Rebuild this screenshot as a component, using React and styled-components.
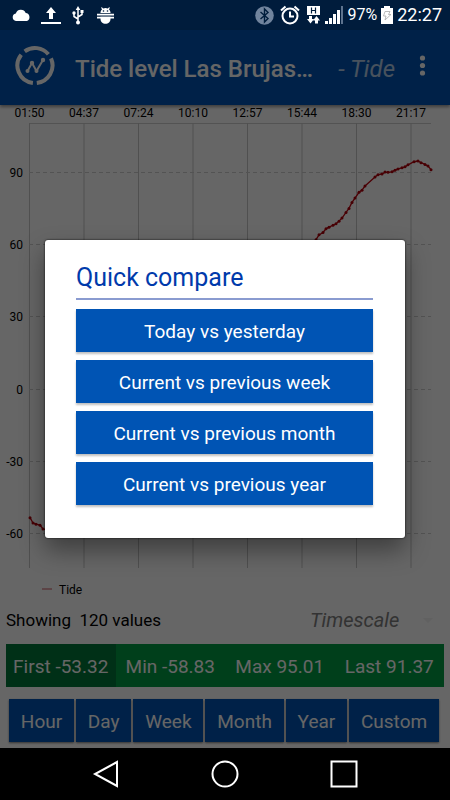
import React from "react";
import styled, { createGlobalStyle } from "styled-components";

const GlobalStyle = createGlobalStyle`
  body {
    margin: 0;
    background: #000;
    font-family: Roboto, "Liberation Sans", sans-serif;
  }

  * {
    box-sizing: border-box;
  }

  button,
  select {
    font-family: inherit;
  }
`;

const Phone = styled.div`
  display: flex;
  flex-direction: column;
  min-height: 100vh;
`;

const Screen = styled.div`
  position: relative;
  flex: 1;
  display: flex;
  flex-direction: column;
  background-color: #fff;
`;

const StatusBar = styled.div`
  display: flex;
  align-items: center;
  justify-content: space-between;
  height: 30px;
  padding: 0 8px 0 12px;
  background-color: #004896;
  color: #fff;
`;

const StatusIcons = styled.div`
  position: relative;
  z-index: 2;
  display: flex;
  align-items: center;
  gap: ${(props) => props.$gap};
`;

const StatusText = styled.span`
  font-size: ${(props) => (props.$large ? "18px" : "16px")};
  line-height: 32px;
`;

const AppBar = styled.header`
  display: flex;
  align-items: center;
  height: 75px;
  padding: 0 20px 0 15px;
  background-color: #0054b4;
  color: #fff;
  box-shadow: 0 2px 3px rgba(0, 0, 0, 0.4);
`;

const Title = styled.h1`
  flex: 1;
  margin: 0 0 0 20px;
  padding-top: 2px;
  font-size: 24px;
  font-weight: 500;
  line-height: 30px;
`;

const SeriesName = styled.span`
  padding-top: 2px;
  font-size: 24px;
  font-style: italic;
  line-height: 30px;
  opacity: 0.7;
`;

const MenuButton = styled.button`
  display: flex;
  margin-left: 20px;
  padding: 0;
  border: 0;
  background: none;
`;

const Chart = styled.svg`
  display: block;
  width: 100%;
  height: auto;
  font-size: 12px;
`;

const SummaryRow = styled.div`
  display: flex;
  align-items: center;
  justify-content: space-between;
  height: 40px;
  padding: 0 17px 0 6px;
`;

const Showing = styled.p`
  margin: 0;
  font-size: 17px;
  white-space: pre;
`;

const Timescale = styled.label`
  display: flex;
  align-items: center;
`;

const TimescaleSelect = styled.select`
  appearance: none;
  width: 113px;
  padding: 0;
  border: 0;
  background: none;
  color: #808080;
  font-size: 20px;
  font-style: italic;
`;

const Stats = styled.div`
  display: grid;
  grid-template-columns: repeat(4, 1fr);
  margin: 4px 6px 0;
  background-color: #009d44;
`;

const Stat = styled.div`
  height: 43px;
  background-color: ${(props) => (props.$active ? "#00783a" : "transparent")};
  color: #fff;
  font-size: 19px;
  line-height: 45px;
  text-align: center;
`;

const RangeRow = styled.div`
  display: flex;
  gap: 2px;
  margin: 12px 11px 6px 9px;
`;

const RangeButton = styled.button`
  flex: 1 0 auto;
  height: 43px;
  padding: 2px 11px 0;
  border: 0;
  background-color: #0054b4;
  box-shadow: 0 1px 2px rgba(0, 0, 0, 0.5);
  color: #fff;
  font-size: 19px;
`;

const Scrim = styled.div`
  position: absolute;
  inset: 0;
  display: flex;
  align-items: center;
  justify-content: center;
  padding: 30px 45px 0;
  background-color: rgba(0, 0, 0, 0.6);
`;

const Dialog = styled.div`
  width: 100%;
  padding: 21px 32px 33px 31px;
  border-radius: 3px;
  background-color: #fff;
  box-shadow: 0 12px 24px rgba(0, 0, 0, 0.4), 0 0 2px #000;
`;

const DialogTitle = styled.h2`
  margin: 0 0 9px;
  padding-bottom: 4px;
  border-bottom: 2px solid #8a9bd0;
  color: #003aab;
  font-size: 25px;
  font-weight: 400;
  line-height: 33px;
`;

const CompareList = styled.div`
  display: grid;
  gap: 8px;
`;

const CompareButton = styled.button`
  height: 43px;
  padding: 2px 0 0;
  border: 0;
  background-color: #0054b4;
  box-shadow: 0 2px 2px rgba(0, 0, 0, 0.25);
  color: #fff;
  font-size: 19px;
`;

const NavBar = styled.nav`
  display: flex;
  justify-content: center;
  gap: 91px;
  height: 52px;
  background-color: #000;
`;

const NavButton = styled.button`
  display: flex;
  align-items: center;
  padding: 0;
  border: 0;
  background: none;
`;

const TIMES = ["01:50", "04:37", "07:24", "10:10", "12:57", "15:44", "18:30", "21:17"];
const LEVELS = [90, 60, 30, 0, -30, -60];
const STATS = ["First -53.32", "Min -58.83", "Max 95.01", "Last 91.37"];
const RANGES = ["Hour", "Day", "Week", "Month", "Year", "Custom"];
const COMPARISONS = [
  "Today vs yesterday",
  "Current vs previous week",
  "Current vs previous month",
  "Current vs previous year",
];

// [x, tide level]
const READINGS = [
  [30, -53.3], [33, -55.5], [36, -56], [40, -56.4], [43, -58], [50, -58.8],
  [80, -50], [120, -20], [160, 10], [200, 28], [240, 36], [280, 48],
  [312, 60], [316, 62.3], [319, 64.3], [323, 65.3], [326, 66.8], [329, 67.5],
  [333, 68.3], [336, 68.9], [339, 70], [342, 71.3], [346, 73.6], [349, 75.3],
  [352, 77.8], [355, 79.6], [359, 82], [362, 82.9], [365, 84.6], [375, 88.4],
  [378, 89.3], [382, 89.6], [385, 90.4], [388, 90.3], [392, 90.5], [395, 91.2],
  [398, 91.7], [402, 92.2], [405, 92.6], [408, 93.4], [414, 94.7], [418, 95],
  [421, 94.3], [425, 93.6], [428, 92.9], [431, 91.4],
];

const timeX = (i) => 29.5 + i * 54.5;
const levelY = (level) => 284.5 - level * 2.405;

function TideChart() {
  const points = READINGS.map(([x, level]) => `${x},${levelY(level)}`);

  return (
    <Chart viewBox="0 0 450 495" role="img" aria-label="Tide">
      <path d="M29 18.5H431" stroke="#d0d0d0" />
      {TIMES.map((time, i) => (
        <g key={time}>
          <text x={timeX(i)} y="12" textAnchor="middle">{time}</text>
          <path d={`M${timeX(i)} 18V463`} stroke="#c8c8c8" />
        </g>
      ))}
      {LEVELS.map((level) => (
        <g key={level}>
          <text x="23" y={levelY(level) + 4} textAnchor="end">{level}</text>
          <path
            d={`M29 ${Math.round(levelY(level)) - 0.5}H431`}
            stroke="#cfcfcf"
            strokeDasharray="4 3"
          />
        </g>
      ))}
      <polyline points={points.join(" ")} fill="none" stroke="#c0000c" strokeWidth="1.3" />
      {READINGS.map(([x, level]) => (
        <circle key={x} cx={x} cy={levelY(level)} r="1.5" fill="#b0000c" />
      ))}
      <path d="M42 484H52" stroke="#d6747c" strokeWidth="1.2" />
      <text x="59" y="489">Tide</text>
    </Chart>
  );
}

function CloudIcon() {
  return (
    <svg width="19" height="13" viewBox="0 0 19 13" fill="#fff">
      <path d="M4 12a3.800 3.800 0 0 1-.2-7.500A5.300 5.300 0 0 1 13.700 4 4.200 4.200 0 0 1 15 12z" />
    </svg>
  );
}

function UploadIcon() {
  return (
    <svg width="20" height="20" viewBox="0 0 20 20" fill="#fff">
      <path d="M10 2l5 6H12v6H8V8H5zM0 17h20v2H0z" />
    </svg>
  );
}

function UsbIcon() {
  return (
    <svg width="16" height="19" viewBox="-1 0 16 19" fill="none" stroke="#fff" strokeWidth="1.500">
      <path d="M6 3v12M6 13L2 10.500V6M6 11l4-2.500V6" />
      <path d="M6 0l2.300 4H3.700z" fill="#fff" stroke="none" />
      <circle cx="6" cy="16.500" r="2" fill="#fff" stroke="none" />
      <circle cx="2" cy="7" r="1.700" fill="#fff" stroke="none" />
      <path d="M8.500 4h3v3h-3z" fill="#fff" stroke="none" />
    </svg>
  );
}

function DebugIcon() {
  return (
    <svg width="17" height="17" viewBox="0 0 17 17" fill="#fff">
      <path d="M3.500 6c0-1.500.6-2.800 1.600-3.700L4 .8l.9-.6L6.200 1.600a6 6 0 0 1 4.600 0L12.100.2l.9.6-1.100 1.500c1 .9 1.600 2.200 1.600 3.700z" />
      <path d="M0 6.800h17v1.700H0zM0 9.800h17v1.700H0z" />
      <path d="M3.500 9.800h10v2.200c0 3-2.200 4.800-5 4.800s-5-1.800-5-4.800z" />
      <circle cx="6.500" cy="4" r=".8" fill="#001d3c" />
      <circle cx="10.500" cy="4" r=".8" fill="#001d3c" />
    </svg>
  );
}

function BluetoothIcon() {
  return (
    <svg width="19" height="19" viewBox="0 0 19 19" fill="none">
      <circle cx="9.500" cy="9.500" r="9.300" fill="#71849d" />
      <path d="M5.500 6l7.500 6.500L9.500 16V3L13 6.500 5.500 13" stroke="#001d3c" strokeWidth="1.400" />
    </svg>
  );
}

function AlarmIcon() {
  return (
    <svg width="20" height="20" viewBox="0 0 20 20" fill="none" stroke="#fff" strokeWidth="2">
      <circle cx="10" cy="11" r="7.500" />
      <path d="M10 6.500V11.500h4M1 5.500L5.500 1.500M19 5.500L14.500 1.500" />
    </svg>
  );
}

function DataIcon() {
  return (
    <svg width="15" height="18" viewBox="0 0 15 18" fill="#fff">
      <path d="M1 0h13v9H1z" />
      <path d="M5.500 1.500v6M9.500 1.500v6M5.500 4.500h4" stroke="#001d3c" strokeWidth="1.200" />
      <path d="M3 10h3v3h2l-3.500 4.500L1 13h2zM9 17.500h3v-3h2L10.500 10 7 14.500h2z" />
    </svg>
  );
}

function SignalIcon() {
  return (
    <svg width="18" height="18" viewBox="0 0 18 18" fill="#fff">
      <path d="M0 15h3v3H0zM4 12h3v6H4zM8 8h3v10H8zM12 4h3v14h-3z" />
      <path d="M16 0h2v18h-2z" fill="#5d738e" />
    </svg>
  );
}

function BatteryIcon() {
  return (
    <svg width="12" height="18" viewBox="0 0 12 18" fill="#fff">
      <path d="M3 0h6v2h3v16H0V2h3z" />
      <path d="M4 5.500h5L7.500 8.500H10L4 14l1-4H2.500z" fill="none" stroke="#aaa" strokeWidth=".8" />
    </svg>
  );
}

function LogoIcon() {
  return (
    <svg width="40" height="46" viewBox="0 0 40 46" fill="none" stroke="#fff">
      <path
        d="M9.700 6.300A17.500 17.500 0 0 1 33.400 9.300M36 13.400A17.500 17.500 0 0 1 21.800 37.900M17.900 37.900A17.500 17.500 0 0 1 6.200 9.700"
        strokeWidth="4"
      />
      <path d="M12.500 26L17 18L21.500 26L28 15" strokeWidth="2" />
      <g fill="#fff" stroke="none">
        <circle cx="12.500" cy="26" r="2" />
        <circle cx="17" cy="18" r="2.200" />
        <circle cx="21.500" cy="26" r="2" />
        <circle cx="28" cy="15" r="2.200" />
      </g>
    </svg>
  );
}

function App() {
  return (
    <Phone>
      <GlobalStyle />
      <Screen>
        <StatusBar>
          <StatusIcons $gap="10px">
            <CloudIcon />
            <UploadIcon />
            <UsbIcon />
            <DebugIcon />
          </StatusIcons>
          <StatusIcons $gap="4px">
            <StatusIcons $gap="6px">
              <BluetoothIcon />
              <AlarmIcon />
              <DataIcon />
            </StatusIcons>
            <SignalIcon />
            <StatusText>97%</StatusText>
            <BatteryIcon />
            <StatusText $large>22:27</StatusText>
          </StatusIcons>
        </StatusBar>

        <AppBar>
          <LogoIcon />
          <Title>Tide level Las Brujas…</Title>
          <SeriesName>- Tide</SeriesName>
          <MenuButton aria-label="Menu">
            <svg width="15" height="26" viewBox="0 0 15 26" fill="#fff">
              <circle cx="7.500" cy="3" r="2.600" />
              <circle cx="7.500" cy="10.500" r="2.600" />
              <circle cx="7.500" cy="18" r="2.600" />
            </svg>
          </MenuButton>
        </AppBar>

        <TideChart />

        <SummaryRow>
          <Showing>Showing  120 values</Showing>
          <Timescale>
            <TimescaleSelect aria-label="Timescale">
              <option>Timescale</option>
            </TimescaleSelect>
            <svg width="10" height="5" viewBox="0 0 10 5" fill="#f2f2f2">
              <path d="M0 0h10L5 5z" />
            </svg>
          </Timescale>
        </SummaryRow>

        <Stats>
          {STATS.map((stat, i) => (
            <Stat key={stat} $active={i === 0}>{stat}</Stat>
          ))}
        </Stats>

        <RangeRow>
          {RANGES.map((range) => (
            <RangeButton key={range}>{range}</RangeButton>
          ))}
        </RangeRow>

        <Scrim>
          <Dialog role="dialog" aria-labelledby="compare-title">
            <DialogTitle id="compare-title">Quick compare</DialogTitle>
            <CompareList>
              {COMPARISONS.map((label) => (
                <CompareButton key={label}>{label}</CompareButton>
              ))}
            </CompareList>
          </Dialog>
        </Scrim>
      </Screen>

      <NavBar>
        <NavButton aria-label="Back">
          <svg width="28" height="28" viewBox="0 0 28 28" fill="none" stroke="#fff" strokeWidth="2">
            <path d="M25 2v24L3 14z" />
          </svg>
        </NavButton>
        <NavButton aria-label="Home">
          <svg width="28" height="28" viewBox="0 0 28 28" fill="none" stroke="#fff" strokeWidth="2">
            <circle cx="14" cy="14" r="12.500" />
          </svg>
        </NavButton>
        <NavButton aria-label="Recent apps">
          <svg width="28" height="28" viewBox="0 0 28 28" fill="none" stroke="#fff" strokeWidth="2">
            <path d="M1.500 1.500h25v25h-25z" />
          </svg>
        </NavButton>
      </NavBar>
    </Phone>
  );
}

export default App;
